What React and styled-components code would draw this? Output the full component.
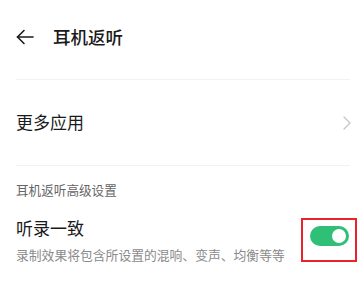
import React from "react";
import styled, { createGlobalStyle } from "styled-components";

const Global = createGlobalStyle`
  html, body { margin: 0; padding: 0; background: #fff; }
  body { font-family: "Noto Sans CJK SC", "Noto Sans", sans-serif; overflow: hidden; }
`;

const Page = styled.div`
  width: 364px;
  height: 289px;
  background: #fff;
  overflow: hidden;
`;

const Header = styled.div`
  display: flex;
  align-items: center;
  height: 79px;
  padding: 0 16px;
  gap: 19px;
`;

const Title = styled.div`
  font-size: 17.5px;
  color: #1a1a1a;
  font-weight: 500;
  line-height: 1;
  margin-top: -5px;
`;

const BackWrap = styled.div`
  display: flex;
  margin-top: -5px;
`;

const Divider = styled.div`
  height: 1px;
  background: #f2f2f2;
  margin: 0 14px 0 16px;
`;

const LinkRow = styled.div`
  display: flex;
  align-items: center;
  justify-content: space-between;
  height: 85px;
  padding: 0 13px 0 16px;
`;

const RowLabel = styled.div`
  font-size: 17px;
  color: #1a1a1a;
  line-height: 1;
  margin-top: ${(p) => p.$shift || "0"};
`;

const SectionHeader = styled.div`
  font-size: 12.6px;
  color: #666;
  padding: 18px 16px 0;
  line-height: 1;
`;

const ToggleRow = styled.div`
  display: flex;
  align-items: flex-start;
  padding: 22px 7px 0 16px;
  gap: 6px;
`;

const TextCol = styled.div`
  flex: 1;
  min-width: 0;
  display: flex;
  flex-direction: column;
  gap: 13px;
`;

const Desc = styled.div`
  font-size: 12.8px;
  color: #8a8a8a;
  white-space: nowrap;
  line-height: 1;
`;

const Highlight = styled.div`
  flex: none;
  box-sizing: border-box;
  width: 56px;
  height: 44px;
  border: 2px solid #e8232a;
  padding: 6px 0 0 7px;
  margin-top: -1px;
`;

const Switch = styled.div`
  width: 39px;
  height: 20px;
  border-radius: 10px;
  background: ${(p) => (p.$on ? "#2fbf77" : "#ccc")};
  position: relative;
`;

const Knob = styled.div`
  position: absolute;
  top: 3px;
  left: ${(p) => (p.$on ? "22px" : "3px")};
  width: 14px;
  height: 14px;
  border-radius: 50%;
  background: #fff;
`;

const BackIcon = () => (
  <svg width="18" height="16" viewBox="0 0 18 16" fill="none" stroke="#1a1a1a" strokeWidth="1.6" strokeLinecap="round" strokeLinejoin="round">
    <path d="M1.5 8H17" />
    <path d="M8 1.5L1.5 8L8 14.5" />
  </svg>
);

const Chevron = () => (
  <svg width="8" height="14" viewBox="0 0 8 14" fill="none" stroke="#c4c4c4" strokeWidth="1.2" strokeLinecap="round" strokeLinejoin="round">
    <path d="M1 1L7 7L1 13" />
  </svg>
);

export default function App() {
  const on = true;
  return (
    <Page>
      <Global />
      <Header>
        <BackWrap>
          <BackIcon />
        </BackWrap>
        <Title>耳机返听</Title>
      </Header>
      <Divider />
      <LinkRow>
        <RowLabel $shift="-3px">更多应用</RowLabel>
        <Chevron />
      </LinkRow>
      <Divider />
      <SectionHeader>耳机返听高级设置</SectionHeader>
      <ToggleRow>
        <TextCol>
          <RowLabel>听录一致</RowLabel>
          <Desc>录制效果将包含所设置的混响、变声、均衡等等</Desc>
        </TextCol>
        <Highlight>
          <Switch $on={on}>
            <Knob $on={on} />
          </Switch>
        </Highlight>
      </ToggleRow>
    </Page>
  );
}
